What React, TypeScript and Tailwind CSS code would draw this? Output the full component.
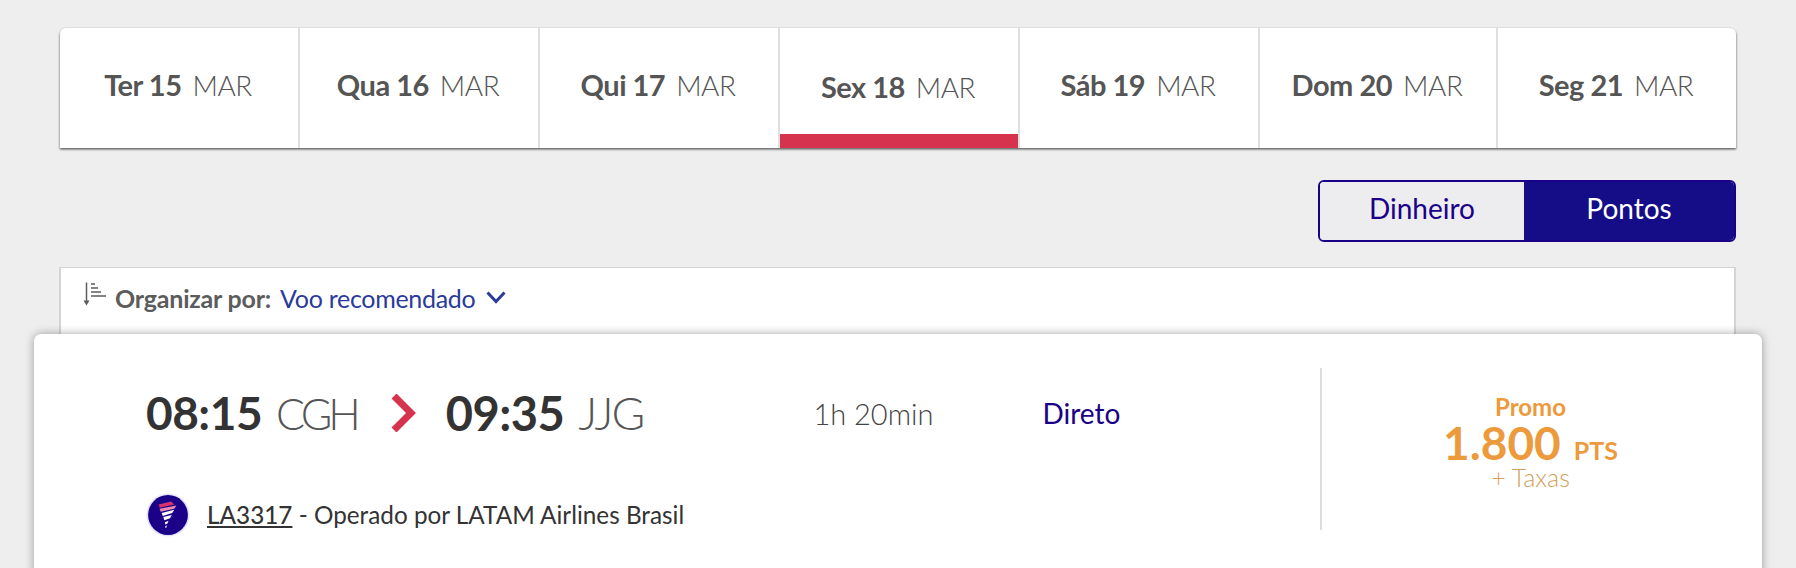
import React from 'react';

const days = [
  { label: 'Ter 15', width: 'w-[240px]' },
  { label: 'Qua 16', width: 'w-[240px]' },
  { label: 'Qui 17', width: 'w-[240px]' },
  { label: 'Sex 18', width: 'w-[240px]', active: true },
  { label: 'Sáb 19', width: 'w-[240px]' },
  { label: 'Dom 20', width: 'w-[238px]' },
  { label: 'Seg 21', width: 'flex-1' },
];

const SortIcon = () => (
  <svg width="24" height="24" viewBox="0 0 24 24" fill="none" stroke="#5c5c5c" strokeWidth="1.5" className="mt-[1px] shrink-0">
    <path d="M3.5 0.5V20" />
    <path d="M0.5 18.5L3.5 23.5L6.5 18.5Z" fill="#5c5c5c" stroke="none" />
    <path d="M8 2H12M8 6H15M8 10H18M8 14H23" />
  </svg>
);

const LatamLogo = () => (
  <svg width="44" height="44" viewBox="0 0 42 42" className="shrink-0">
    <circle cx="21" cy="21" r="20.5" fill="#e6e3f6" />
    <circle cx="21" cy="21" r="19" fill="#1b0088" />
    <path d="M12 11L24 8L27 11L13 14Z" fill="#d6336c" />
    <path d="M13 15L29 12L27 15L14 18Z" fill="#e98ab0" />
    <path d="M15 19L27 16L25 19L16 22Z" fill="#ffffff" />
    <path d="M16.5 23L24.5 21L23 24L17.5 26Z" fill="#ffffff" />
    <path d="M18 28L21.5 26.5L20.5 29L18.5 30Z" fill="#ffffff" />
    <path d="M18.5 31.5L20 31L19.5 33L18.5 33.5Z" fill="#ffffff" />
  </svg>
);

export default function App() {
  return (
    <div className="h-[568px] w-full overflow-hidden bg-[#eeeeee] pt-[28px] [font-family:Lato,sans-serif]">
      <div className="ml-[60px] mr-[60px] flex h-[120px] overflow-hidden rounded-t-[6px] bg-white shadow-[0_2px_2px_rgba(0,0,0,0.3),0_-1px_0_#dddddd,1px_1px_2px_rgba(0,0,0,0.2),-1px_1px_2px_rgba(0,0,0,0.2)]">
        {days.map((day, i) => (
          <div
            key={day.label}
            className={`${day.width} relative flex h-full items-start justify-center pr-[2px] ${i < 6 ? 'border-r-2 border-[#dfdfdf]' : ''} ${day.active ? 'pt-[40px]' : 'pt-[38px]'}`}
          >
            <span className="text-[29px] leading-[38px] tracking-[-0.5px] text-[#555555]">
              <span className="font-bold">{day.label}</span>
              <span className="ml-[11px] text-[28px] font-light">MAR</span>
            </span>
            {day.active && <div className="absolute inset-x-0 bottom-0 h-[14px] bg-[#d6334f]" />}
          </div>
        ))}
      </div>

      <div className="mr-[60px] mt-[32px] flex justify-end">
        <div className="flex h-[62px] w-[418px] overflow-hidden rounded-[6px] border-2 border-[#1b0088] text-[28px] leading-[34px]">
          <div className="flex w-[204px] items-center justify-center bg-[#ededf0] pb-[6px] text-[#1b0088]">Dinheiro</div>
          <div className="flex flex-1 items-center justify-center bg-[#150c88] pb-[6px] text-white">Pontos</div>
        </div>
      </div>

      <div className="ml-[59px] mr-[60px] mt-[25px] flex h-[71px] items-start gap-[9px] border-x-2 border-t border-[#d4d4d4] bg-white pl-[22px] pt-[13px]">
        <SortIcon />
        <span className="-ml-[1px] text-[25px] font-bold leading-[34px] tracking-[-0.2px] text-[#5c5c5c]">Organizar por:</span>
        <span className="text-[25px] leading-[34px] tracking-[-0.3px] text-[#2b3a9b]">Voo recomendado</span>
        <svg width="20" height="13" viewBox="0 0 20 13" fill="none" stroke="#2b3a9b" strokeWidth="3" className="ml-[2px] mt-[10px]">
          <path d="M1.5 1.5L10 10.5L18.5 1.5" />
        </svg>
      </div>

      <div className="relative z-10 mx-[34px] -mt-[4px] flex h-[300px] rounded-t-[7px] bg-white pt-[34px] shadow-[0_0_10px_rgba(0,0,0,0.35)]">
        <div className="h-[162px] flex-1 pl-[112px]">
          <div className="mt-[18px] flex h-[50px] w-full items-center pt-[4px] text-[#333333]">
            <span className="text-[46px] font-bold leading-none tracking-[-0.5px]">08:15</span>
            <span className="ml-[14px] text-[43px] font-light leading-none tracking-[-4px] text-[#555555]">CGH</span>
            <svg width="27" height="38" viewBox="0 0 27 38" fill="none" stroke="#d6334f" strokeWidth="7" className="ml-[33px]">
              <path d="M4 2L21 19L4 36" />
            </svg>
            <span className="ml-[29px] text-[47px] font-bold leading-none tracking-[-0.5px]">09:35</span>
            <span className="ml-[14px] text-[46px] font-light leading-none tracking-[-2px] text-[#555555]">JJG</span>
            <span className="ml-[170px] text-[29px] font-light leading-none text-[#444444]">1h 20min</span>
            <span className="ml-[109px] text-[28px] leading-none text-[#1b0088]">Direto</span>
          </div>
          <div className="mt-[57px] flex items-center">
            <LatamLogo />
            <span className="ml-[17px] text-[24.3px] leading-[34px] text-[#333333]">
              <span className="font-medium underline decoration-2 underline-offset-2">LA3317</span> - Operado por LATAM Airlines Brasil
            </span>
          </div>
        </div>

        <div className="flex h-[162px] w-[442px] flex-col items-center border-l-2 border-[#dddddd] pr-[23px] pt-[27px] text-[#ec9a3c]">
          <span className="text-[24px] font-bold leading-[24px]">Promo</span>
          <span className="mt-[9px] text-[46px] font-bold leading-[30px]">
            1.800<span className="ml-[13px] text-[25px]">PTS</span>
          </span>
          <span className="text-[25px] font-light leading-[24px] text-[#d19f5e]">+ Taxas</span>
        </div>
      </div>
    </div>
  );
}
